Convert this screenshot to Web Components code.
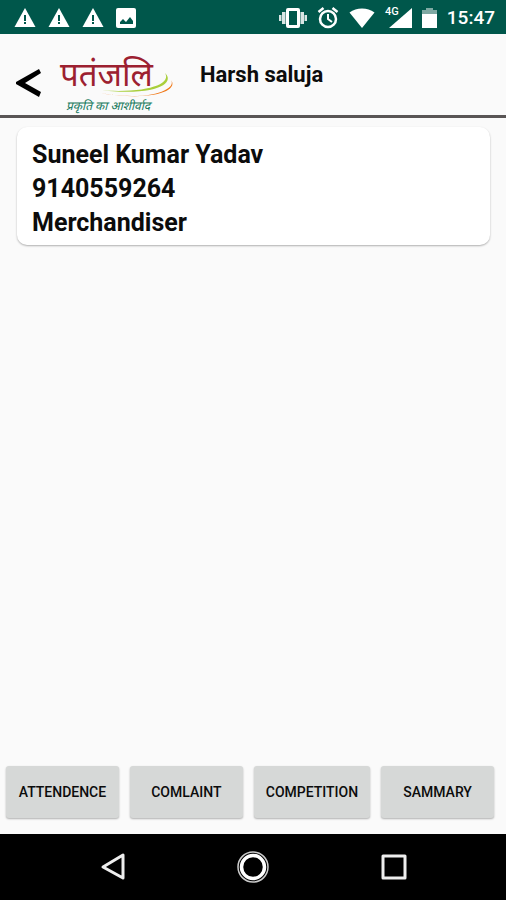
<!DOCTYPE html>
<html lang="en">
<head>
<meta charset="utf-8">
<meta name="viewport" content="width=device-width, initial-scale=1">
<title>Harsh saluja</title>
<style>
    body {
        margin: 0;
        min-height: 100vh;
        display: flex;
        flex-direction: column;
        background: #fafafa;
        color: #0c0c0c;
        font-family: Roboto, "Noto Sans", sans-serif;
        font-weight: 500;
    }
    main {
        flex: 1;
        padding: 9px 16px 0 17px;
    }
</style>
</head>
<body>
<status-bar time="15:47"></status-bar>
<app-header>Harsh saluja</app-header>
<main>
    <contact-card>
        <span slot="name">Suneel Kumar Yadav</span>
        <span slot="phone">9140559264</span>
        <span slot="role">Merchandiser</span>
    </contact-card>
</main>
<action-bar>
    <action-button>ATTENDENCE</action-button>
    <action-button>COMLAINT</action-button>
    <action-button>COMPETITION</action-button>
    <action-button>SAMMARY</action-button>
</action-bar>
<system-nav></system-nav>

<script>
function render(element, html) {
    const template = document.createElement('template')
    template.innerHTML = html
    element.attachShadow({ mode: 'open' })
    element.shadowRoot.appendChild(template.content.cloneNode(true))
}

const warningIcon = `
    <svg width="22" height="20" viewBox="0 0 22 20">
        <path fill="#fff" d="M11 0 21.500 19H.5z"/>
        <path fill="#00574b" d="M10 7h2v6h-2zM10 14h2v2h-2z"/>
    </svg>`

class StatusBar extends HTMLElement {
    constructor() {
        super()
        render(this, `
            <style>
                :host {
                    display: flex;
                    align-items: center;
                    justify-content: space-between;
                    box-sizing: border-box;
                    height: 34px;
                    padding: 1px 11px 0 14px;
                    background: #00574b;
                    color: #fff;
                }
                div {
                    display: flex;
                    align-items: center;
                    gap: 12px;
                }
                .system {
                    gap: 10px;
                }
                svg {
                    display: block;
                }
                .signal {
                    display: flex;
                    gap: 0;
                    align-items: flex-start;
                }
                .signal span {
                    font-size: 11px;
                    line-height: 8px;
                    margin-right: -10px;
                }
                time {
                    font-size: 19px;
                    line-height: 24px;
                }
            </style>
            <div>
                ${warningIcon}${warningIcon}${warningIcon}
                <svg width="20" height="20" viewBox="0 0 20 20">
                    <rect width="20" height="20" rx="2" fill="#fff"/>
                    <path fill="#00574b" d="M4 16v-2l3-3 3 3 4-5 3 4v3z"/>
                </svg>
            </div>
            <div class="system">
                <svg width="28" height="20" viewBox="0 0 28 20" fill="#fff">
                    <path fill-rule="evenodd" d="M9 0h10a2 2 0 0 1 2 2v16a2 2 0 0 1-2 2H9a2 2 0 0 1-2-2V2a2 2 0 0 1 2-2zM10 3v14h8V3z"/>
                    <path d="M3 4h3.500v12H3zM21.500 4H25v12h-3.500zM0 7h2.500v6H0zM25.500 7H28v6h-2.500z" opacity=".85"/>
                </svg>
                <svg width="22" height="22" viewBox="0 0 22 22" fill="none" stroke="#fff">
                    <circle cx="11" cy="12" r="8" stroke-width="2.500"/>
                    <path d="M11 7v5l4 3" stroke-width="2"/>
                    <path d="M1.500 5l5-4M20.500 5l-5-4" stroke-width="2.500"/>
                </svg>
                <svg width="26" height="20" viewBox="0 0 26 20">
                    <path fill="#fff" d="M13 20 .5 4.500Q6 .5 13 .5t12.500 4z"/>
                </svg>
                <div class="signal">
                    <span>4G</span>
                    <svg width="23" height="20" viewBox="0 0 23 20"><path fill="#fff" d="M23 0v20H0z"/></svg>
                </div>
                <svg width="15" height="20" viewBox="0 0 15 20">
                    <path fill="#7fa9a3" d="M4 0h7v2h4v4H0V2h4z"/>
                    <path fill="#fff" d="M0 6h15v14H0z"/>
                </svg>
                <time></time>
            </div>`)
        this.shadowRoot.querySelector('time').textContent = this.getAttribute('time')
    }
}

class BrandLogo extends HTMLElement {
    constructor() {
        super()
        render(this, `
            <style>
                :host {
                    display: block;
                }
                svg {
                    display: block;
                    overflow: visible;
                }
                text {
                    font-family: "Noto Sans Devanagari", "Noto Sans", "Noto Serif", serif;
                    font-weight: 400;
                }
            </style>
            <svg width="116" height="58" viewBox="0 0 116 58" role="img" aria-label="पतंजलि" lang="hi">
                <path fill="#a9cf3c" d="M105 17c10 9-5 24-68 17 50 4 75-6 68-17z"/>
                <path fill="#f07a1c" d="M111 24c6 9-20 22-71 13 54 9 79-3 71-13z"/>
                <text x="0" y="30" font-size="33" fill="#9c2030">पतंजलि</text>
                <text x="6" y="54" font-size="12" font-style="italic" fill="#14785a">प्रकृति का आशीर्वाद</text>
            </svg>`)
    }
}

class AppHeader extends HTMLElement {
    constructor() {
        super()
        render(this, `
            <style>
                :host {
                    display: block;
                }
                header {
                    display: flex;
                    align-items: flex-start;
                    box-sizing: border-box;
                    height: 84px;
                    padding: 22px 16px 0;
                    border-bottom: 3px solid #595555;
                }
                button {
                    border: 0;
                    padding: 12px 18px 0 0;
                    background: none;
                }
                svg {
                    display: block;
                }
                h1 {
                    margin: 6px 0 0 24px;
                    font-size: 22px;
                    line-height: 26px;
                    font-weight: 700;
                }
            </style>
            <header>
                <button type="button" aria-label="Back">
                    <svg width="26" height="30" viewBox="0 0 26 30">
                        <path fill="#000" d="M23 1l2 4L9 15l16 9-2 5L0 16v-2z"/>
                    </svg>
                </button>
                <brand-logo></brand-logo>
                <h1><slot></slot></h1>
            </header>`)
    }
}

class ContactCard extends HTMLElement {
    constructor() {
        super()
        render(this, `
            <style>
                :host {
                    display: flex;
                    flex-direction: column;
                    padding: 11px 15px 5px;
                    border-radius: 10px;
                    background: #fff;
                    box-shadow: 0 1px 2px rgba(0, 0, 0, .3);
                    font-size: 25px;
                    font-weight: 700;
                    line-height: 34px;
                }
            </style>
            <slot name="name"></slot>
            <slot name="phone"></slot>
            <slot name="role"></slot>`)
    }
}

class ActionBar extends HTMLElement {
    constructor() {
        super()
        render(this, `
            <style>
                :host {
                    display: flex;
                    gap: 11px;
                    padding: 0 12px 16px 6px;
                }
            </style>
            <slot></slot>`)
    }
}

class ActionButton extends HTMLElement {
    constructor() {
        super()
        render(this, `
            <style>
                :host {
                    display: block;
                    flex: 1 1 0;
                }
                button {
                    width: 100%;
                    height: 52px;
                    padding: 0 12px;
                    border: 0;
                    border-radius: 3px;
                    background: #d6d8d7;
                    box-shadow: 0 1px 2px rgba(0, 0, 0, .3);
                    color: inherit;
                    font: inherit;
                    font-size: 14px;
                    white-space: nowrap;
                }
            </style>
            <button type="button"><slot></slot></button>`)
    }
}

class SystemNav extends HTMLElement {
    constructor() {
        super()
        render(this, `
            <style>
                :host {
                    display: block;
                    background: #000;
                }
                nav {
                    display: flex;
                    justify-content: center;
                    gap: 108px;
                    height: 66px;
                }
                button {
                    padding: 0;
                    border: 0;
                    background: none;
                }
                svg {
                    display: block;
                }
            </style>
            <nav>
                <button type="button" aria-label="Back">
                    <svg width="32" height="32" viewBox="0 0 32 32" fill="none" stroke="#eee" stroke-width="3" stroke-linejoin="round">
                        <path d="M26 4v23L6 16z"/>
                    </svg>
                </button>
                <button type="button" aria-label="Home">
                    <svg width="32" height="32" viewBox="0 0 32 32" fill="none">
                        <circle cx="16" cy="16" r="15" stroke="#ccc" stroke-width="1.500"/>
                        <circle cx="16" cy="16" r="11.500" stroke="#fff" stroke-width="3.500"/>
                    </svg>
                </button>
                <button type="button" aria-label="Recent apps">
                    <svg width="32" height="32" viewBox="0 0 32 32" fill="none" stroke="#eee" stroke-width="3" stroke-linejoin="round">
                        <path d="M6 5h22v22H6z"/>
                    </svg>
                </button>
            </nav>`)
    }
}

customElements.define('status-bar', StatusBar)
customElements.define('brand-logo', BrandLogo)
customElements.define('app-header', AppHeader)
customElements.define('contact-card', ContactCard)
customElements.define('action-bar', ActionBar)
customElements.define('action-button', ActionButton)
customElements.define('system-nav', SystemNav)
</script>
</body>
</html>
